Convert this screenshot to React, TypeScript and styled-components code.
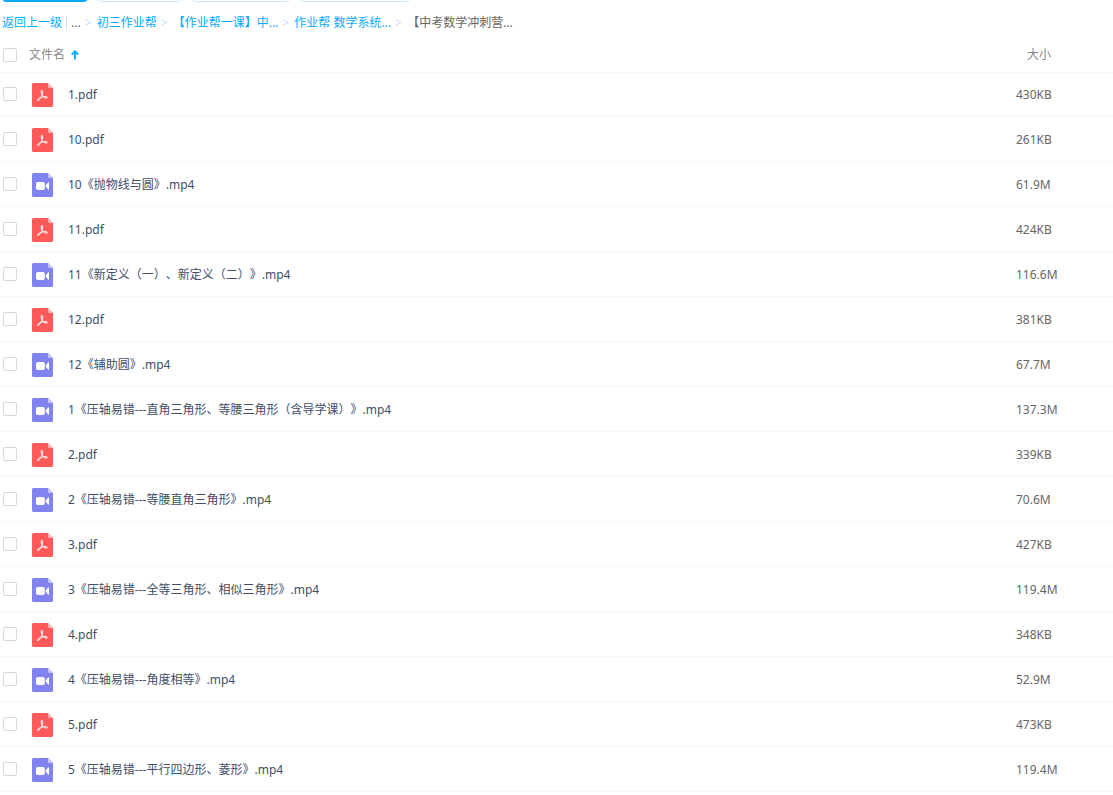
import React from "react";
import styled, { createGlobalStyle, css } from "styled-components";

const GlobalStyle = createGlobalStyle`
  *, *::before, *::after { box-sizing: border-box; }
  body {
    margin: 0;
    background: #fff;
    color: #424e67;
    font: 12px/18px "Noto Sans", "Noto Sans CJK SC", sans-serif;
    text-spacing-trim: space-all;
  }
`;

const Toolbar = styled.div`
  display: flex;
  align-items: flex-end;
  gap: 10px;
  height: 2px;
  padding-left: 2px;
  overflow: hidden;
`;

const ToolButton = styled.button<{ $width: number; $primary?: boolean }>`
  flex: none;
  width: ${(p) => p.$width}px;
  height: 32px;
  padding: 0;
  border: 1px solid ${(p) => (p.$primary ? "#09aaff" : "#c3eaff")};
  border-radius: 4px;
  background: ${(p) => (p.$primary ? "#09aaff" : "#fff")};
`;

const Breadcrumb = styled.nav`
  display: flex;
  align-items: center;
  height: 42px;
  padding-left: 2px;
  white-space: nowrap;
`;

const crumb = css`
  white-space: pre;
`;

const CrumbLink = styled.a`
  ${crumb}
  color: #09aaff;
  text-decoration: none;
`;

const CrumbText = styled.span`
  ${crumb}
  color: #666;
`;

const Divider = styled.span`
  width: 1px;
  height: 12px;
  margin: 0 4px;
  background: #c4dbfe;
`;

const Chevron = styled.span`
  width: 7px;
  margin: 0 5px 0 4px;
  color: #c4dbfe;
`;

const FileTable = styled.table`
  width: 100%;
  border-spacing: 0;
  table-layout: fixed;
`;

const HeadCell = styled.th<{ $size?: boolean }>`
  width: ${(p) => (p.$size ? "97px" : "auto")};
  height: 28px;
  padding: 0 0 6px ${(p) => (p.$size ? "11px" : "3px")};
  box-shadow: 0 1px #f2f6fd;
  color: #888;
  font-weight: 400;
  text-align: left;
  vertical-align: bottom;
`;

const HeadLine = styled.div`
  display: flex;
  align-items: center;
  gap: 12px;
  height: 22px;
`;

const SortButton = styled.button`
  display: flex;
  align-items: center;
  gap: 6px;
  padding: 0;
  border: 0;
  background: none;
  color: inherit;
  font: inherit;
`;

const Cell = styled.td`
  height: 45px;
  padding: 0;
  border-bottom: 1px solid #f2f6fd;
  color: #666;
`;

const NameLine = styled.div`
  display: flex;
  align-items: center;
  height: 44px;
  padding-left: 3px;
`;

const Checkbox = styled.input`
  appearance: none;
  flex: none;
  width: 14px;
  height: 14px;
  margin: 0;
  border: 1px solid #d4d9e4;
  border-radius: 2px;
  background: #fff;

  &:checked {
    background: #09aaff;
  }
`;

const FileLabel = styled.label`
  display: flex;
  align-items: center;
  gap: 15px;
  padding: 2px 0 0 15px;
  color: #424e67;
  white-space: nowrap;
`;

const FileIcon = styled.svg`
  flex: none;
  width: 21px;
  height: 24px;
`;

const PdfIcon = () => (
  <FileIcon viewBox="0 0 21 24" aria-hidden="true">
    <path d="M1.500 0H16L21 5V22.500a1.500 1.500 0 0 1-1.500 1.500H1.500a1.500 1.500 0 0 1-1.500-1.500V1.500a1.500 1.500 0 0 1 1.500-1.500Z" fill="#ff5a5a" />
    <path d="M16 0 21 5H17.500a1.500 1.500 0 0 1-1.500-1.500Z" fill="#ffb5b5" />
    <path
      d="M9.800 7.300c1.400 0 .9 2.700.3 4.600-.8 2.400-2.700 5.300-4 5.700-1.100.2-.9-1.200.5-2.100 2-1.200 5-2 7.400-1.900 1.900.1 1.900 1.700.3 1.600-1.900-.2-3.700-1.800-4.600-3.900-.7-1.700-1-4 .1-4Z"
      fill="none"
      stroke="#fff"
      strokeWidth="1"
      strokeLinejoin="round"
    />
  </FileIcon>
);

const VideoIcon = () => (
  <FileIcon viewBox="0 0 21 24" aria-hidden="true">
    <path d="M1.500 0H16L21 5V22.500a1.500 1.500 0 0 1-1.500 1.500H1.500a1.500 1.500 0 0 1-1.500-1.500V1.500a1.500 1.500 0 0 1 1.500-1.500Z" fill="#8183f1" />
    <path d="M16 0 21 5H17.500a1.500 1.500 0 0 1-1.500-1.500Z" fill="#c6c7fa" />
    <rect x="4" y="9" width="8.800" height="8" rx="1.800" fill="#fff" />
    <path d="M13.400 13 16 9.600q1-.9 1 .3V16.100q0 1.200-1 .3Z" fill="#fff" />
  </FileIcon>
);

const files: [string, string][] = [
  ["1.pdf", "430KB"],
  ["10.pdf", "261KB"],
  ["10《抛物线与圆》.mp4", "61.9M"],
  ["11.pdf", "424KB"],
  ["11《新定义（一）、新定义（二）》.mp4", "116.6M"],
  ["12.pdf", "381KB"],
  ["12《辅助圆》.mp4", "67.7M"],
  ["1《压轴易错---直角三角形、等腰三角形（含导学课）》.mp4", "137.3M"],
  ["2.pdf", "339KB"],
  ["2《压轴易错---等腰直角三角形》.mp4", "70.6M"],
  ["3.pdf", "427KB"],
  ["3《压轴易错---全等三角形、相似三角形》.mp4", "119.4M"],
  ["4.pdf", "348KB"],
  ["4《压轴易错---角度相等》.mp4", "52.9M"],
  ["5.pdf", "473KB"],
  ["5《压轴易错---平行四边形、菱形》.mp4", "119.4M"],
];

const SizeText = styled.div`
  padding-top: 1px;
`;

export default function App() {
  return (
    <>
      <GlobalStyle />
      <Toolbar>
        <ToolButton $width={86} $primary aria-label="上传" />
        <ToolButton $width={84} aria-label="新建文件夹" />
        <ToolButton $width={98} aria-label="离线下载" />
        <ToolButton $width={110} aria-label="我的设备" />
      </Toolbar>
      <Breadcrumb>
        <CrumbLink href="#up">返回上一级</CrumbLink>
        <Divider />
        <CrumbText>...</CrumbText>
        <Chevron>&gt;</Chevron>
        <CrumbLink href="#grade">初三作业帮</CrumbLink>
        <Chevron>&gt;</Chevron>
        <CrumbLink href="#course">【作业帮一课】中...</CrumbLink>
        <Chevron>&gt;</Chevron>
        <CrumbLink href="#math">作业帮 数学系统...</CrumbLink>
        <Chevron>&gt;</Chevron>
        <CrumbText>【中考数学冲刺营...</CrumbText>
      </Breadcrumb>
      <FileTable>
        <thead>
          <tr>
            <HeadCell>
              <HeadLine>
                <Checkbox type="checkbox" aria-label="全选" />
                <SortButton type="button">
                  文件名
                  <svg width="8" height="10" viewBox="0 0 8 10" aria-hidden="true">
                    <path d="M4 9.500V1.500M.7 4.600 4 1.300 7.300 4.600" fill="none" stroke="#09aaff" strokeWidth="1.900" />
                  </svg>
                </SortButton>
              </HeadLine>
            </HeadCell>
            <HeadCell $size>
              <HeadLine>大小</HeadLine>
            </HeadCell>
          </tr>
        </thead>
        <tbody>
          {files.map(([name, size], i) => (
            <tr key={name}>
              <Cell>
                <NameLine>
                  <Checkbox type="checkbox" id={`file-${i}`} />
                  <FileLabel htmlFor={`file-${i}`}>
                    {name.endsWith(".pdf") ? <PdfIcon /> : <VideoIcon />}
                    {name}
                  </FileLabel>
                </NameLine>
              </Cell>
              <Cell>
                <SizeText>{size}</SizeText>
              </Cell>
            </tr>
          ))}
        </tbody>
      </FileTable>
    </>
  );
}
